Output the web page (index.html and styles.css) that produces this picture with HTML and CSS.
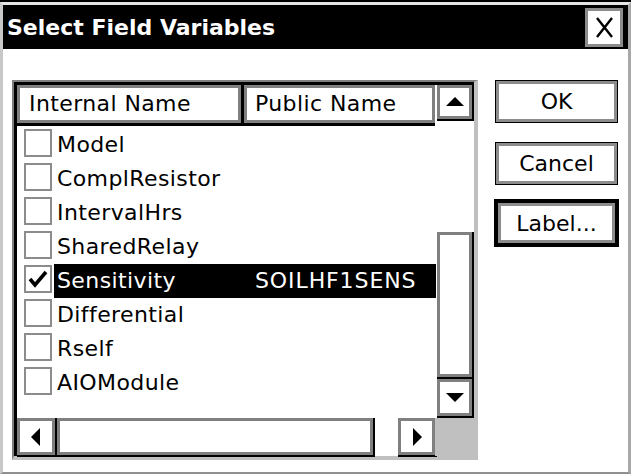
FILE: index.html
```html
<!DOCTYPE html>
<html>
<head>
<meta charset="utf-8">
<link rel="stylesheet" href="styles.css">
</head>
<body>
<div class="dialog">
  <div class="frame">
    <div class="titlebar">
      <span class="title">Select Field Variables</span>
      <div class="close">
        <svg width="32" height="33" viewBox="0 0 32 33"><path d="M9 7 L24 26 M24 7 L9 26" stroke="#000" stroke-width="2.4" fill="none"/></svg>
      </div>
    </div>
    <div class="content">
      <div class="listbox">
        <div class="listframe">
          <div class="lgrid">
            <div class="header">
              <div class="hcell bevel internal">Internal Name</div>
              <div class="hcell bevel public">Public Name</div>
            </div>
            <div class="vscroll">
              <div class="sbtn bevel up"><svg width="18" height="10" viewBox="0 0 18 10"><polygon points="9,0 18,9 0,9" fill="#000"/></svg></div>
              <div class="track"></div>
              <div class="thumb bevel"></div>
              <div class="sbtn bevel down"><svg width="18" height="10" viewBox="0 0 18 10"><polygon points="0,0 18,0 9,9" fill="#000"/></svg></div>
            </div>
            <div class="rows">
              <div class="row"><span class="cb"></span><span class="name">Model</span><span class="pub"></span></div>
              <div class="row"><span class="cb"></span><span class="name">ComplResistor</span><span class="pub"></span></div>
              <div class="row"><span class="cb"></span><span class="name">IntervalHrs</span><span class="pub"></span></div>
              <div class="row"><span class="cb"></span><span class="name">SharedRelay</span><span class="pub"></span></div>
              <div class="row sel"><span class="cb"><svg width="24" height="24" viewBox="0 0 24 24"><polyline points="4,12 9,18 20,5" stroke="#000" stroke-width="3.6" fill="none"/></svg></span><span class="name">Sensitivity</span><span class="pub">SOILHF1SENS</span></div>
              <div class="row"><span class="cb"></span><span class="name">Differential</span><span class="pub"></span></div>
              <div class="row"><span class="cb"></span><span class="name">Rself</span><span class="pub"></span></div>
              <div class="row"><span class="cb"></span><span class="name">AIOModule</span><span class="pub"></span></div>
            </div>
            <div class="hscroll">
              <div class="hbtn bevel left"><svg width="10" height="18" viewBox="0 0 10 18"><polygon points="9,0 9,18 0,9" fill="#000"/></svg></div>
              <div class="hthumb bevel"></div>
              <div class="htrack"></div>
              <div class="hbtn bevel right"><svg width="10" height="18" viewBox="0 0 10 18"><polygon points="1,0 10,9 1,18" fill="#000"/></svg></div>
            </div>
            <div class="corner"></div>
          </div>
        </div>
      </div>
      <div class="buttons">
        <div class="btn ok">OK</div>
        <div class="btn cancel">Cancel</div>
        <div class="btn default">Label...</div>
      </div>
    </div>
  </div>
</div>
</body>
</html>
```
FILE: styles.css
```css
html, body {
  margin: 0;
  padding: 0;
  background: #fff;
}
body {
  font-family: "DejaVu Sans", sans-serif;
  font-size: 22px;
  color: #000;
}
.dialog {
  width: 631px;
  height: 474px;
  box-sizing: border-box;
  border-top: 2px solid #000;
}
.frame {
  height: 472px;
  box-sizing: border-box;
  border-left: 3px solid #c8c8c8;
  border-top: 3px solid #e4e4e4;
  border-right: 3px solid #a8a8a8;
  border-bottom: 2px solid #909090;
  background: #fff;
}
.titlebar {
  height: 44px;
  background: #000;
  display: flex;
  align-items: flex-start;
  justify-content: space-between;
}
.title {
  color: #fff;
  font-weight: bold;
  font-size: 22px;
  line-height: 42px;
  padding-top: 2px;
  padding-left: 4px;
}
.close {
  width: 38px;
  height: 39px;
  box-sizing: border-box;
  margin-top: 3px;
  margin-right: 5px;
  background: #fff;
  border: 3px solid #8c8c8c;
  display: flex;
}
.content {
  display: flex;
  align-items: flex-start;
  padding-left: 9px;
  padding-top: 31px;
}
.listbox {
  width: 466px;
  height: 380px;
  box-sizing: border-box;
  border-top: 2px solid #808080;
  border-left: 2px solid #808080;
  border-right: 4px solid #c0c0c0;
  border-bottom: 4px solid #c0c0c0;
}
.listframe {
  height: 100%;
  box-sizing: border-box;
  border-top: 3px solid #000;
  border-left: 3px solid #000;
}
.lgrid {
  display: grid;
  grid-template-columns: 420px 37px;
  grid-template-rows: 41px 292px 38px;
  height: 100%;
  letter-spacing: 0.4px;
}
.bevel {
  box-sizing: border-box;
  background: #fff;
  border-right: 2px solid #000;
  border-bottom: 2px solid #000;
  box-shadow: inset 0 0 0 3px #808080;
}
.header {
  grid-column: 1;
  grid-row: 1;
  display: flex;
}
.hcell {
  height: 41px;
  border-right-width: 3px;
  border-bottom-width: 3px;
  line-height: 33px;
  padding-top: 2px;
  white-space: nowrap;
}
.hcell.internal {
  width: 227px;
  padding-left: 12px;
}
.hcell.public {
  flex: 1;
  padding-left: 11px;
  border-right: 0;
  margin-right: 2px;
}
.vscroll {
  grid-column: 2;
  grid-row: 1 / span 2;
  display: flex;
  flex-direction: column;
}
.sbtn {
  display: flex;
  align-items: center;
  justify-content: center;
}
.sbtn.up {
  height: 36px;
}
.track {
  height: 111px;
  background: #fff;
}
.thumb {
  height: 147px;
}
.sbtn.down {
  flex: 1;
}
.rows {
  grid-column: 1;
  grid-row: 2;
  padding-top: 2px;
  overflow: hidden;
}
.row {
  display: flex;
  height: 34px;
  align-items: flex-start;
  white-space: nowrap;
}
.cb {
  width: 28px;
  height: 28px;
  box-sizing: border-box;
  margin-top: 1px;
  margin-left: 7px;
  border: 2px solid #8c8c8c;
  background: #fff;
  display: flex;
  align-items: center;
  justify-content: center;
}
.name {
  margin-left: 2px;
  width: 190px;
  box-sizing: border-box;
  padding-left: 3px;
  line-height: 34px;
}
.pub {
  width: 192px;
  box-sizing: border-box;
  padding-left: 11px;
  line-height: 34px;
  height: 34px;
  letter-spacing: 0.9px;
}
.row.sel .name,
.row.sel .pub {
  background: #000;
  color: #fff;
}
.hscroll {
  grid-column: 1;
  grid-row: 3;
  display: flex;
}
.hbtn {
  display: flex;
  align-items: center;
  justify-content: center;
  height: 39px;
}
.hbtn.left {
  width: 40px;
}
.hthumb {
  width: 318px;
  height: 39px;
}
.htrack {
  width: 23px;
  background: #fff;
}
.hbtn.right {
  flex: 1;
}
.corner {
  grid-column: 2;
  grid-row: 3;
  background: #c0c0c0;
  margin-left: -2px;
}
.buttons {
  margin-left: 16px;
  width: 125px;
  display: flex;
  flex-direction: column;
  align-items: center;
}
.btn {
  box-sizing: border-box;
  display: flex;
  align-items: center;
  justify-content: center;
  background: #fff;
  white-space: nowrap;
}
.ok,
.cancel {
  width: 123px;
  height: 43px;
  border: 1px solid #000;
  box-shadow: inset 0 0 0 3px #8c8c8c;
}
.cancel {
  margin-top: 19px;
}
.default {
  width: 125px;
  height: 48px;
  margin-top: 14px;
  border: 4px solid #000;
  box-shadow: inset 0 0 0 3px #8c8c8c;
}
```
